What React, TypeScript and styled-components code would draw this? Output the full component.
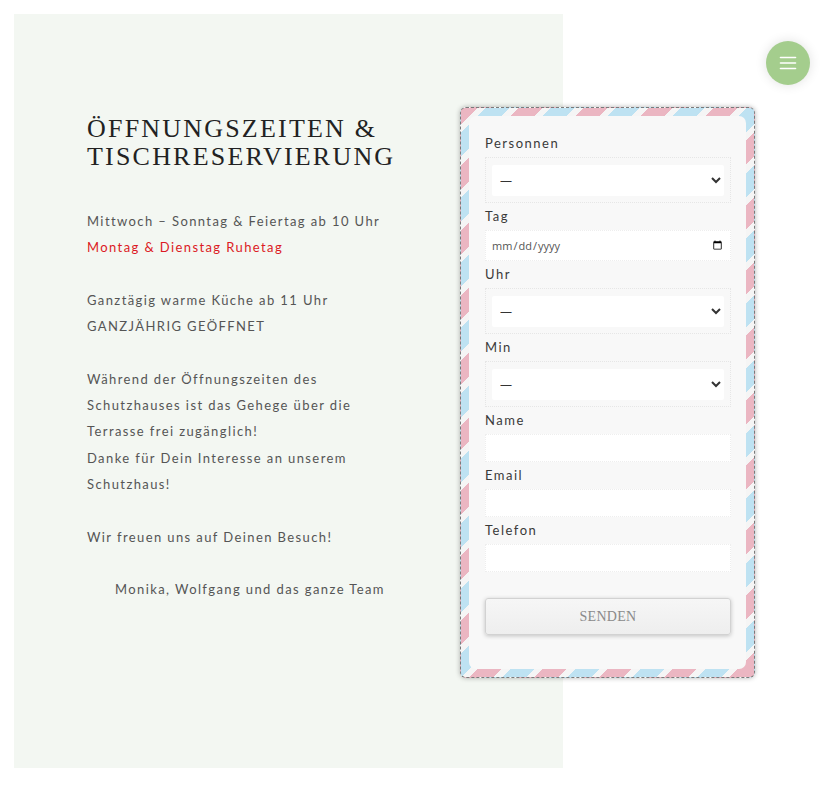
import styled, { createGlobalStyle } from "styled-components";

const GlobalStyle = createGlobalStyle`
  html, body {
    margin: 0;
    padding: 0;
    background: #ffffff;
  }
  * {
    box-sizing: border-box;
  }
`

const Page = styled.div`
  padding: 14px;
  min-height: 787px;
`

const Panel = styled.section`
  width: 549px;
  height: 754px;
  background-color: #f3f7f2;
  padding: 93px 0 0 73px;
  display: flex;
  flex-direction: row;
  align-items: flex-start;
  gap: 47px;
`

const TextColumn = styled.div`
  width: 326px;
  flex-shrink: 0;
  padding-top: 8px;
`

const Title = styled.h1`
  margin: 0 0 37px;
  font-family: "Liberation Serif", "DejaVu Serif", serif;
  font-weight: normal;
  font-size: 26px;
  line-height: 28px;
  letter-spacing: 2.2px;
  color: #222;
  white-space: nowrap;
`

const Para = styled.p<{ $center?: boolean }>`
  margin: 0 0 26.3px;
  font-family: Lato, "Open Sans", sans-serif;
  font-size: 13px;
  line-height: 26.3px;
  letter-spacing: 1.4px;
  color: #555;
  white-space: nowrap;
  text-align: ${(p) => (p.$center ? "center" : "left")};
`

const Red = styled.span`
  color: #dc1a24;
`

const Card = styled.div`
  width: 295px;
  flex-shrink: 0;
  padding: 8px;
  border: 1px dashed #7a7a7a;
  border-radius: 6px;
  box-shadow: 0 0 5px rgba(0, 0, 0, 0.3);
  background: repeating-linear-gradient(
    -45deg,
    #ebb6c2 0 17px,
    #f5f5f5 17px 23px,
    #bee2f2 23px 40px,
    #f5f5f5 40px 46px
  );
`

const CardInner = styled.form`
  background: #f8f8f8;
  border-radius: 7px;
  padding: 16px 15px 34px 16px;
  display: flex;
  flex-direction: column;
`

const Group = styled.div`
  display: flex;
  flex-direction: column;
  margin-bottom: 2px;
`

const Label = styled.label`
  display: block;
  margin-bottom: 3px;
  font-family: Lato, "Open Sans", sans-serif;
  font-size: 13px;
  line-height: 22px;
  letter-spacing: 1.5px;
  color: #3a3a3a;
`

const SelectWrap = styled.div`
  border: 1px dotted #e6e6e6;
  padding: 7px 6px 6px;
`

const Select = styled.select`
  width: 100%;
  height: 31px;
  border: none;
  border-radius: 2px;
  background: #ffffff;
  padding: 0 4px;
  font-family: "Open Sans", sans-serif;
  font-size: 12px;
  color: #333;
  outline: none;
`

const Input = styled.input<{ $h?: number }>`
  width: 100%;
  height: ${(p) => p.$h ?? 28}px;
  border: 1px dotted #eeeeee;
  background: #ffffff;
  padding: 0 5px;
  font-family: "Open Sans", sans-serif;
  font-size: 11px;
  color: #555;
  outline: none;
`

const SubmitButton = styled.button`
  margin-top: 24px;
  height: 37px;
  width: 100%;
  border: 1px solid #d2d2d2;
  border-radius: 3px;
  background: linear-gradient(#f6f6f6, #eeeeee);
  box-shadow: 0 1px 4px rgba(0, 0, 0, 0.22);
  font-family: "Liberation Serif", "DejaVu Serif", serif;
  font-size: 14px;
  letter-spacing: 0.3px;
  color: #8a8a8a;
  cursor: pointer;
`

const MenuButton = styled.button`
  position: fixed;
  top: 41px;
  right: 20px;
  width: 44px;
  height: 44px;
  border-radius: 50%;
  border: none;
  background: #a4cd8d;
  box-shadow: 0 0 12px rgba(0, 0, 0, 0.12);
  display: flex;
  align-items: center;
  justify-content: center;
  padding: 0;
  cursor: pointer;
`

const SelectField = ({ label }: { label: string }) => (
  <Group>
    <Label>{label}</Label>
    <SelectWrap>
      <Select defaultValue="">
        <option value="">—</option>
      </Select>
    </SelectWrap>
  </Group>
)

const InputField = ({ label, type, h }: { label: string; type: string; h?: number }) => (
  <Group>
    <Label>{label}</Label>
    <Input type={type} $h={h} />
  </Group>
)

export default function App() {
  return (
    <>
      <GlobalStyle />
      <Page>
        <Panel>
          <TextColumn>
            <Title>
              ÖFFNUNGSZEITEN &amp;
              <br />
              TISCHRESERVIERUNG
            </Title>
            <Para>
              Mittwoch – Sonntag &amp; Feiertag ab 10 Uhr
              <br />
              <Red>Montag &amp; Dienstag Ruhetag</Red>
            </Para>
            <Para>
              Ganztägig warme Küche ab 11 Uhr
              <br />
              GANZJÄHRIG GEÖFFNET
            </Para>
            <Para>
              Während der Öffnungszeiten des
              <br />
              Schutzhauses ist das Gehege über die
              <br />
              Terrasse frei zugänglich!
              <br />
              Danke für Dein Interesse an unserem
              <br />
              Schutzhaus!
            </Para>
            <Para>Wir freuen uns auf Deinen Besuch!</Para>
            <Para $center>Monika, Wolfgang und das ganze Team</Para>
          </TextColumn>
          <Card>
            <CardInner onSubmit={(e) => e.preventDefault()}>
              <SelectField label="Personnen" />
              <InputField label="Tag" type="date" h={31} />
              <SelectField label="Uhr" />
              <SelectField label="Min" />
              <InputField label="Name" type="text" />
              <InputField label="Email" type="email" />
              <InputField label="Telefon" type="tel" />
              <SubmitButton type="submit">SENDEN</SubmitButton>
            </CardInner>
          </Card>
        </Panel>
      </Page>
      <MenuButton aria-label="Menü">
        <svg width="18" height="14" viewBox="0 0 18 14">
          <g stroke="#ffffff" strokeWidth="1.6" strokeLinecap="round">
            <line x1="1.5" y1="1.5" x2="16.5" y2="1.5" />
            <line x1="1.5" y1="7" x2="16.5" y2="7" />
            <line x1="1.5" y1="12.5" x2="16.5" y2="12.5" />
          </g>
        </svg>
      </MenuButton>
    </>
  );
}
